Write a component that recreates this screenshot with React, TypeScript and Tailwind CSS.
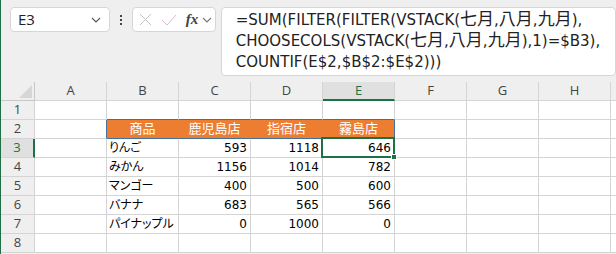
import React from 'react';

const cols = ['A', 'B', 'C', 'D', 'E', 'F', 'G', 'H', ''];

const rows: (string | number)[][] = [
  ['', '', '', '', '', '', '', '', ''],
  ['', '商品', '鹿児島店', '指宿店', '霧島店', '', '', '', ''],
  ['', 'りんご', 593, 1118, 646, '', '', '', ''],
  ['', 'みかん', 1156, 1014, 782, '', '', '', ''],
  ['', 'マンゴー', 400, 500, 600, '', '', '', ''],
  ['', 'バナナ', 683, 565, 566, '', '', '', ''],
  ['', 'パイナップル', 0, 1000, 0, '', '', '', ''],
  ['', '', '', '', '', '', '', '', ''],
];

const cellFont = "font-['DejaVu_Sans','Noto_Sans_CJK_JP',sans-serif]";
const uiFont = "font-['Open_Sans','Noto_Sans',sans-serif]";

const Chevron = ({ className }: { className?: string }) => (
  <svg width="10" height="6" viewBox="0 0 10 6" className={className}>
    <path d="M1 1l4 4 4-4" fill="none" stroke="currentColor" strokeWidth="1.1" />
  </svg>
);

// wider kanji in the formula bar
const J = ({ children }: { children: React.ReactNode }) => (
  <span className="text-[17px] leading-none">{children}</span>
);

const App: React.FC = () => {
  return (
    <div className="w-[616px] h-[254px] overflow-hidden bg-[#efefef] border-l border-[#1e7145]">
      {/* formula area */}
      <div className="h-[82px] flex items-start pt-[7px]">
        <div className={`ml-[9px] w-[101px] h-[25px] bg-white border border-[#d6d6d6] rounded-[4px] flex items-center justify-between pl-[7px] pr-[8px] ${uiFont}`}>
          <span className="text-[15px] text-[#222]">E3</span>
          <Chevron className="text-[#555]" />
        </div>
        <div className="w-[22px] h-[25px] flex flex-col items-center justify-center gap-[2px]">
          <span className="w-[2px] h-[2px] bg-[#444]" />
          <span className="w-[2px] h-[2px] bg-[#444]" />
          <span className="w-[2px] h-[2px] bg-[#444]" />
        </div>
        <div className="w-[85px] h-[25px] bg-white border border-[#d6d6d6] rounded-[4px] flex items-center pl-[6px]">
          <svg width="13" height="13" viewBox="0 0 13 13">
            <path d="M1 1l11 11M12 1L1 12" stroke="#c4c4c4" strokeWidth="1" fill="none" />
          </svg>
          <svg width="16" height="12" viewBox="0 0 16 12" className="ml-[9px]">
            <path d="M1 6l5 5 9-10" stroke="#d8bcd2" strokeWidth="1" fill="none" />
          </svg>
          <span className="ml-[9px] font-['Liberation_Serif',serif] italic font-bold text-[15px] text-[#444] leading-none">fx</span>
          <Chevron className="ml-[4px] text-[#777]" />
        </div>
        <div className="ml-[5px] w-[400px] h-[69px] bg-white border border-[#d6d6d6] rounded-[4px] pl-[14px] pt-[2px]">
          <div className="font-['DejaVu_Sans','Noto_Sans_CJK_JP',sans-serif] text-[15px] leading-[21px] text-[#222] whitespace-nowrap">
            <div>=SUM(FILTER(FILTER(VSTACK(<J>七月</J>,<J>八月</J>,<J>九月</J>),</div>
            <div>CHOOSECOLS(VSTACK(<J>七月</J>,<J>八月</J>,<J>九月</J>),1)=$B3),</div>
            <div>COUNTIF(E$2,$B$2:$E$2)))</div>
          </div>
        </div>
      </div>

      {/* sheet */}
      <div className="grid grid-cols-[34px_repeat(9,72px)]">
        {/* column header */}
        <div className="h-[19px] border-r border-b border-[#c8c8c8] bg-[#efefef] flex items-end justify-end pr-[2px] pb-[2px]">
          <div className="w-0 h-0 border-l-[13px] border-l-transparent border-b-[13px] border-b-[#d6d6d6]" />
        </div>
        {cols.map((c, i) => (
          <div
            key={i}
            className={`h-[19px] flex items-center justify-center text-[13px] ${uiFont} ${
              c === 'E'
                ? 'bg-[#e0e0e0] text-[#1e7145] border-b-2 border-[#1e7145] border-r border-r-[#d4d4d4]'
                : 'bg-[#efefef] text-[#444] border-b border-r border-[#d4d4d4]'
            }`}
          >
            {c}
          </div>
        ))}

        {rows.map((row, ri) => {
          const r = ri + 1;
          return (
            <React.Fragment key={r}>
              <div
                className={`h-[19px] flex items-center justify-center text-[13px] ${uiFont} ${
                  r === 3
                    ? 'bg-[#e0e0e0] text-[#1e7145] border-r-2 border-[#1e7145] border-b border-b-[#d4d4d4]'
                    : 'bg-[#efefef] text-[#444] border-r border-b border-[#d4d4d4]'
                }`}
              >
                {r}
              </div>
              {row.map((v, ci) => {
                const isHead = r === 2 && ci >= 1 && ci <= 4;
                const isNum = typeof v === 'number';
                const borderR =
                  (r === 2 && ci === 0) || (r === 2 && ci === 4)
                    ? 'border-r-[#41719c]'
                    : isHead
                    ? 'border-r-[#ed7d31]'
                    : 'border-r-[#d4d4d4]';
                const borderB =
                  (r === 1 || r === 2) && ci >= 1 && ci <= 4 ? 'border-b-[#41719c]' : 'border-b-[#d4d4d4]';
                const selected = r === 3 && ci === 4;
                return (
                  <div
                    key={ci}
                    className={`h-[19px] border-r border-b ${borderR} ${borderB} flex items-center whitespace-nowrap ${cellFont} ${
                      isHead
                        ? 'bg-[#ed7d31] text-white justify-center text-[13px]'
                        : isNum
                        ? 'bg-white text-black justify-end pr-[3px] text-[12px]'
                        : "bg-white text-black pl-[2px] text-[12px] [font-feature-settings:'palt']"
                    } ${selected ? 'relative' : ''}`}
                  >
                    {v}
                    {selected && (
                      <>
                        <div className="absolute -left-[2px] -top-[2px] w-[74px] h-[21px] border-2 border-[#1e7145]" />
                        <div className="absolute -right-[3px] -bottom-[3px] w-[6px] h-[6px] bg-[#1e7145] border border-white" />
                      </>
                    )}
                  </div>
                );
              })}
            </React.Fragment>
          );
        })}
      </div>
    </div>
  );
};

export default App;
